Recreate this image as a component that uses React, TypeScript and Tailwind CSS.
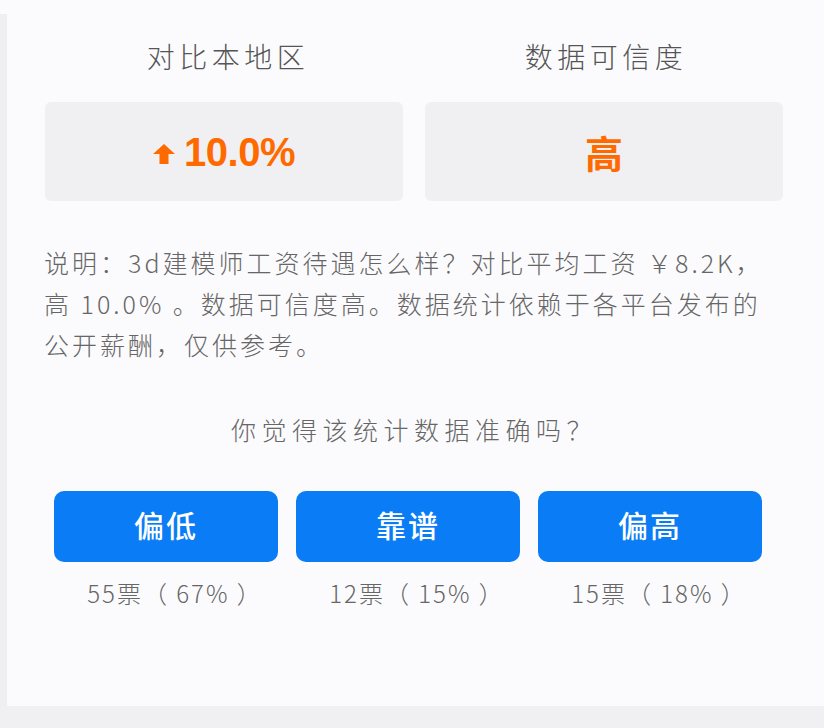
import React from 'react';

const votes = [
  { label: '偏低', count: '55票（ 67% ）' },
  { label: '靠谱', count: '12票（ 15% ）' },
  { label: '偏高', count: '15票（ 18% ）' },
];

function UpArrow() {
  return (
    <svg width="22" height="20" viewBox="0 0 22 20" className="mr-[9px] mt-[5px]">
      <path d="M11 0 L22 10 L15.5 10 L15.5 20 L6.5 20 L6.5 10 L0 10 Z" fill="#ff6a00" />
    </svg>
  );
}

export default function App() {
  return (
    <div
      className="w-[824px] h-[728px] bg-[#fbfbfd] flex flex-col overflow-hidden"
      style={{ fontFamily: '"Noto Sans CJK SC", "Liberation Sans", sans-serif' }}
    >
      <div className="flex flex-1">
        {/* left edge strip */}
        <div className="w-[7px] shrink-0 mt-[14px] bg-[#efeff2]" />

        <div className="flex-1 min-w-0 pl-[38px] pr-[41px] pt-[34px]">
          {/* comparison cards */}
          <div className="grid grid-cols-2 gap-[22px]">
            <div className="flex flex-col items-center">
              <div className="text-[28px] font-light leading-[44px] tracking-[4.5px] text-[#555] pl-[8px]">对比本地区</div>
              <div className="mt-[24px] h-[99px] w-full rounded-[6px] bg-[#f0f0f3] flex items-center justify-center">
                <UpArrow />
                <span
                  className="text-[40px] font-bold text-[#ff6a00] tracking-[-0.5px]"
                  style={{ fontFamily: '"Liberation Sans", Arial, sans-serif' }}
                >
                  10.0%
                </span>
              </div>
            </div>
            <div className="flex flex-col items-center">
              <div className="text-[28px] font-light leading-[44px] tracking-[4.5px] text-[#555] pl-[4px]">数据可信度</div>
              <div className="mt-[24px] h-[99px] w-full rounded-[6px] bg-[#f0f0f3] flex items-center justify-center">
                <span className="text-[38px] font-bold text-[#ff6a00]">高</span>
              </div>
            </div>
          </div>

          {/* description */}
          <div className="mt-[41px] text-[25px] font-light leading-[41px] tracking-[3px] text-[#666] ml-[-1px] whitespace-nowrap">
            <div>说明：3d建模师工资待遇怎么样？对比平均工资 ￥8.2K，</div>
            <div>高 10.0% 。数据可信度高。数据统计依赖于各平台发布的</div>
            <div>公开薪酬，仅供参考。</div>
          </div>

          {/* question */}
          <div className="mt-[46px] text-center text-[25px] font-light leading-[36px] tracking-[5.5px] text-[#666]">
            你觉得该统计数据准确吗？
          </div>

          {/* vote buttons */}
          <div className="mt-[44px] ml-[9px] flex gap-[18px]">
            {votes.map((v) => (
              <div key={v.label} className="w-[224px] flex flex-col items-center">
                <button className="w-full h-[71px] rounded-[10px] bg-[#0a7cf5] text-white text-[30px] font-medium tracking-[2px] flex items-center justify-center pb-[4px]">
                  {v.label}
                </button>
                <div className="mt-[13px] pl-[18px] text-[24px] font-light leading-[36px] tracking-[2px] text-[#666]">{v.count}</div>
              </div>
            ))}
          </div>
        </div>
      </div>
      {/* bottom strip */}
      <div className="h-[22px] bg-[#f0f0f2]" />
    </div>
  );
}
